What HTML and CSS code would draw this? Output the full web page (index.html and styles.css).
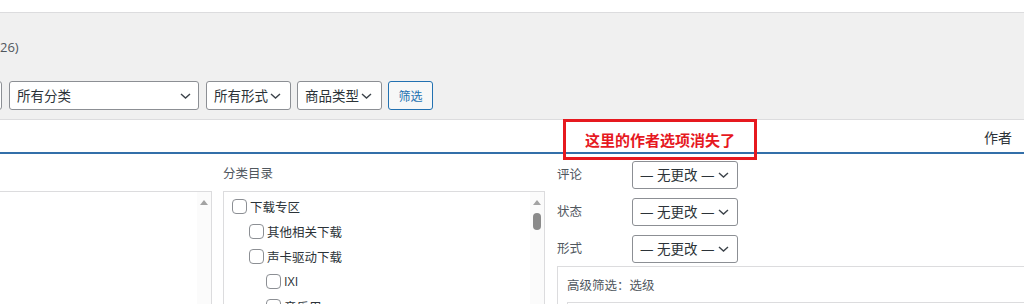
FILE: index.html
```html
<!DOCTYPE html>
<html lang="zh">
<head>
<meta charset="utf-8">
<link rel="stylesheet" href="styles.css">
</head>
<body>
<div class="topband"></div>
<div class="toolbar">
  <div class="count">26)</div>
  <div class="filters">
    <div class="sel sel-cut"></div>
    <div class="sel sel-cat"><span>所有分类</span><svg class="chev" width="11" height="6" viewBox="0 0 11 6"><path d="M1 1 L5.5 5 L10 1" fill="none" stroke="#3c434a" stroke-width="1.4"/></svg></div>
    <div class="sel sel-sm"><span>所有形式</span><svg class="chev" width="11" height="6" viewBox="0 0 11 6"><path d="M1 1 L5.5 5 L10 1" fill="none" stroke="#3c434a" stroke-width="1.4"/></svg></div>
    <div class="sel sel-sm sel-last"><span>商品类型</span><svg class="chev" width="11" height="6" viewBox="0 0 11 6"><path d="M1 1 L5.5 5 L10 1" fill="none" stroke="#3c434a" stroke-width="1.4"/></svg></div>
    <button class="btn">筛选</button>
  </div>
</div>
<div class="thead">
  <span class="th-author">作者</span>
  <div class="note">这里的作者选项消失了</div>
</div>
<div class="edit">
  <div class="col-left">
    <div class="listbox leftbox">
      <div class="scroll"><span class="arrow"></span></div>
    </div>
  </div>
  <div class="col-cat">
    <div class="label">分类目录</div>
    <div class="listbox catbox">
      <ul class="cats">
        <li><span class="cb"></span>下载专区</li>
        <li class="l1"><span class="cb"></span>其他相关下载</li>
        <li class="l1"><span class="cb"></span>声卡驱动下载</li>
        <li class="l2"><span class="cb"></span>IXI</li>
        <li class="l2"><span class="cb"></span>音乐用</li>
      </ul>
      <div class="scroll"><span class="arrow"></span><span class="thumb"></span></div>
    </div>
  </div>
  <div class="col-right">
    <div class="field"><span class="flabel">评论</span><div class="sel sel-nc"><span>— 无更改 —</span><svg class="chev" width="11" height="6" viewBox="0 0 11 6"><path d="M1 1 L5.5 5 L10 1" fill="none" stroke="#3c434a" stroke-width="1.4"/></svg></div></div>
    <div class="field"><span class="flabel">状态</span><div class="sel sel-nc"><span>— 无更改 —</span><svg class="chev" width="11" height="6" viewBox="0 0 11 6"><path d="M1 1 L5.5 5 L10 1" fill="none" stroke="#3c434a" stroke-width="1.4"/></svg></div></div>
    <div class="field field-last"><span class="flabel">形式</span><div class="sel sel-nc"><span>— 无更改 —</span><svg class="chev" width="11" height="6" viewBox="0 0 11 6"><path d="M1 1 L5.5 5 L10 1" fill="none" stroke="#3c434a" stroke-width="1.4"/></svg></div></div>
    <div class="adv">
      <div class="adv-title">高级筛选：选级</div>
      <div class="adv-inner"></div>
    </div>
  </div>
</div>
</body>
</html>
```

FILE: styles.css
```css
body {
  margin: 0;
  width: 1024px;
  height: 304px;
  overflow: hidden;
  background: #fff;
  color: #2c3338;
  font-family: "Open Sans", "Noto Sans CJK SC", sans-serif;
}

.topband {
  height: 12px;
  border-bottom: 1px solid #dcdcde;
}

.toolbar {
  height: 107px;
  box-sizing: border-box;
  padding-top: 24px;
  background: #f0f0f0;
  border-bottom: 1px solid #dcdcde;
}

.count {
  font-size: 13px;
  line-height: 20px;
  color: #50575e;
}

.filters {
  display: flex;
  margin-top: 24px;
  height: 29px;
}

.sel {
  display: flex;
  align-items: center;
  box-sizing: border-box;
  height: 29px;
  padding: 0 7px;
  background: #fff;
  border: 1px solid #8c8f94;
  border-radius: 3px;
  font-size: 13.5px;
  line-height: 20px;
  color: #2c3338;
  white-space: nowrap;
}

.sel .chev {
  margin-left: auto;
  flex: none;
}

.sel-cut {
  width: 60px;
  margin-left: -58px;
  margin-right: 7px;
}

.sel-cat {
  width: 190px;
  margin-right: 7px;
}

.sel-sm {
  width: 85px;
  margin-right: 6px;
  padding-right: 9px;
}

.btn {
  width: 45px;
  height: 29px;
  padding: 0;
  background: #f6f7f7;
  border: 1px solid #2271b1;
  border-radius: 3px;
  color: #2271b1;
  font-family: inherit;
  font-size: 12px;
}

.thead {
  position: relative;
  height: 32px;
  display: flex;
  align-items: center;
  justify-content: flex-end;
  padding-right: 12px;
  border-bottom: 2px solid #336fa9;
}

.th-author {
  font-size: 14px;
  color: #2c3338;
  padding-top: 1px;
}

.note {
  position: absolute;
  left: 563px;
  top: -1px;
  width: 194px;
  height: 41px;
  box-sizing: border-box;
  border: 3px solid #e6191f;
  display: flex;
  align-items: center;
  justify-content: center;
  color: #e6191f;
  font-weight: bold;
  font-size: 15px;
  z-index: 2;
}

.edit {
  display: flex;
}

.col-left {
  width: 212px;
  padding-top: 37px;
}

.col-cat {
  width: 322px;
  margin-left: 11px;
  padding-top: 10px;
}

.col-right {
  flex: 1;
  margin-left: 12px;
  padding-top: 7px;
}

.label {
  font-size: 12.5px;
  line-height: 20px;
  color: #50575e;
  margin-bottom: 7px;
}

.listbox {
  display: flex;
  box-sizing: border-box;
  height: 140px;
  background: #fff;
  border: 1px solid #dcdcde;
}

.leftbox {
  border-left: none;
}

.scroll {
  width: 14px;
  margin-left: auto;
  display: flex;
  flex-direction: column;
  align-items: center;
  padding-top: 8px;
  background: #fbfbfb;
}

.arrow {
  width: 0;
  height: 0;
  border-left: 4px solid transparent;
  border-right: 4px solid transparent;
  border-bottom: 5px solid #a3a3a3;
}

.thumb {
  width: 8px;
  height: 17px;
  margin-top: 8px;
  border-radius: 4px;
  background: #8a8a8a;
}

.cats {
  list-style: none;
  margin: 0;
  padding: 2px 0 0 8px;
  flex: 1;
}

.cats li {
  display: flex;
  align-items: center;
  height: 25px;
  font-size: 12.5px;
  color: #2c3338;
}

.cats li.l1 {
  padding-left: 17px;
}

.cats li.l2 {
  padding-left: 34px;
}

.cb {
  width: 15px;
  height: 15px;
  box-sizing: border-box;
  border: 1px solid #8c8f94;
  border-radius: 4px;
  background: #fff;
  margin-right: 3px;
  flex: none;
}

.field {
  display: flex;
  align-items: center;
  height: 28px;
  margin-bottom: 9px;
}

.field-last {
  margin-bottom: 3px;
}

.flabel {
  width: 75px;
  font-size: 12.5px;
  color: #50575e;
  padding-bottom: 3px;
}

.sel-nc {
  width: 106px;
  height: 28px;
  padding-right: 8px;
}

.adv {
  margin-right: -20px;
  height: 60px;
  padding: 10px 0 0 9px;
  border: 1px solid #dcdcde;
}

.adv-title {
  font-size: 12.5px;
  line-height: 18px;
  color: #50575e;
  margin-bottom: 7px;
}

.adv-inner {
  height: 30px;
  border: 1px solid #dcdcde;
}
```
